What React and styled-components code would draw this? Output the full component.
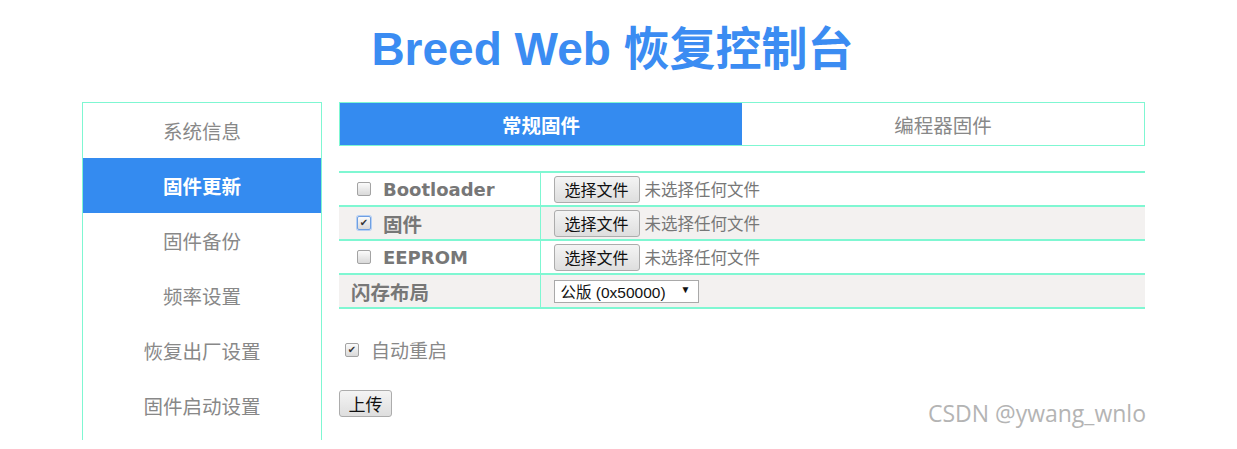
import React from 'react';
import styled, { createGlobalStyle } from 'styled-components';

const GlobalStyle = createGlobalStyle`
  body {
    margin: 0;
    background: #fff;
    font-family: 'Liberation Sans', 'Noto Sans CJK SC', sans-serif;
  }
`;

const menuItems = ['系统信息', '固件更新', '固件备份', '频率设置', '恢复出厂设置', '固件启动设置'];

const rows = [
  { name: 'Bootloader', checked: false },
  { name: '固件', checked: true, focus: true, cjk: true },
  { name: 'EEPROM', checked: false },
];

const App = () => {
  return (
    <Page>
      <GlobalStyle />
      <Title>Breed Web 恢复控制台</Title>
      <Layout>
        <Sidebar>
          {menuItems.map((item) => (
            <MenuItem key={item} active={item === '固件更新'}>
              {item}
            </MenuItem>
          ))}
        </Sidebar>
        <Main>
          <Tabs>
            <Tab active>常规固件</Tab>
            <Tab>编程器固件</Tab>
          </Tabs>
          <Table>
            <tbody>
              {rows.map((row, i) => (
                <Row key={row.name} striped={i % 2 === 1}>
                  <LabelCell>
                    <Check checked={row.checked} focus={row.focus}>
                      {row.checked ? '✔' : ''}
                    </Check>
                    <Label cjk={row.cjk}>{row.name}</Label>
                  </LabelCell>
                  <ValueCell>
                    <FileButton>选择文件</FileButton>
                    <NoFile>未选择任何文件</NoFile>
                  </ValueCell>
                </Row>
              ))}
              <Row striped>
                <LabelCell plain>
                  <Label cjk>闪存布局</Label>
                </LabelCell>
                <ValueCell>
                  <Select>
                    <span>公版 (0x50000)</span>
                    <Arrow>▼</Arrow>
                  </Select>
                </ValueCell>
              </Row>
            </tbody>
          </Table>
          <Option>
            <Check checked>✔</Check>
            <span>自动重启</span>
          </Option>
          <UploadButton>上传</UploadButton>
        </Main>
      </Layout>
      <Watermark>CSDN @ywang_wnlo</Watermark>
    </Page>
  );
};

const Page = styled.div`
  position: relative;
  width: 1237px;
  height: 449px;
  overflow: hidden;
`;

const Title = styled.h1`
  margin: 22px 0 0;
  padding-right: 12px;
  height: 58px;
  line-height: 55px;
  text-align: center;
  font-size: 46px;
  font-weight: 700;
  color: #3b8cf2;
`;

const Layout = styled.div`
  display: flex;
  gap: 17px;
  margin: 22px 0 0 82px;
  width: 1063px;
`;

const Sidebar = styled.div`
  width: 238px;
  height: 337px;
  border: 1px solid #7ff7d2;
  border-bottom: none;
  flex-shrink: 0;
`;

const MenuItem = styled.div`
  height: 55px;
  display: flex;
  align-items: center;
  justify-content: center;
  font-family: 'Noto Sans CJK SC', sans-serif;
  font-size: 19.5px;
  font-weight: ${(p) => (p.active ? 700 : 400)};
  color: ${(p) => (p.active ? '#fff' : '#888')};
  background: ${(p) => (p.active ? '#348bf0' : 'transparent')};
`;

const Main = styled.div`
  width: 807px;
  display: flex;
  flex-direction: column;
  align-items: flex-start;
`;

const Tabs = styled.div`
  display: flex;
  width: 100%;
  height: 44px;
  border: 1px solid #7ff7d2;
  box-sizing: border-box;
`;

const Tab = styled.div`
  flex: 1;
  display: flex;
  align-items: center;
  justify-content: center;
  font-family: 'Noto Sans CJK SC', sans-serif;
  font-size: 19.5px;
  font-weight: ${(p) => (p.active ? 700 : 400)};
  color: ${(p) => (p.active ? '#fff' : '#888')};
  background: ${(p) => (p.active ? '#348bf0' : '#fff')};
`;

const Table = styled.table`
  margin-top: 25px;
  width: 806px;
  border-collapse: collapse;
`;

const Row = styled.tr`
  height: 34px;
  background: ${(p) => (p.striped ? '#f3f1f0' : '#fff')};
  border-top: 2px solid #7ff7d2;
  border-bottom: 2px solid #7ff7d2;
`;

const LabelCell = styled.td`
  box-sizing: border-box;
  width: 201px;
  padding: 0 0 0 ${(p) => (p.plain ? '12px' : '18px')};
  border-right: 1px solid #7ff7d2;
  white-space: nowrap;
`;

const ValueCell = styled.td`
  padding: 0 0 0 13px;
  white-space: nowrap;
`;

const Check = styled.span`
  display: inline-flex;
  align-items: center;
  justify-content: center;
  vertical-align: middle;
  width: 12px;
  height: 12px;
  margin-right: 12px;
  border: 1px solid ${(p) => (p.focus ? '#6f9fe2' : '#a3a3a3')};
  box-shadow: ${(p) => (p.focus ? '0 0 0 1px #b5d0f4' : 'none')};
  border-radius: 2px;
  background: linear-gradient(#fbfbfb, #d9d9d9);
  font-family: 'DejaVu Sans', sans-serif;
  font-size: 10px;
  font-weight: 700;
  line-height: 1;
  color: #333;
`;

const Label = styled.span`
  vertical-align: middle;
  font-family: ${(p) => (p.cjk ? "'Noto Sans CJK SC'" : "'DejaVu Sans', 'Noto Sans CJK SC'")}, sans-serif;
  font-size: ${(p) => (p.cjk ? '19.5px' : '18px')};
  font-weight: 700;
  color: #777;
`;

const FileButton = styled.button`
  height: 27px;
  width: 86px;
  padding: 0;
  vertical-align: middle;
  border: 1px solid #acacac;
  border-radius: 3px;
  background: linear-gradient(#f4f4f4, #dedede);
  font-family: 'Noto Sans CJK SC', sans-serif;
  font-size: 16px;
  color: #111;
`;

const NoFile = styled.span`
  margin-left: 5px;
  vertical-align: middle;
  font-family: 'Noto Sans CJK SC', sans-serif;
  font-size: 16.5px;
  color: #777;
`;

const Select = styled.div`
  display: inline-flex;
  align-items: center;
  justify-content: space-between;
  box-sizing: border-box;
  width: 145px;
  height: 23px;
  padding: 0 7px 0 6px;
  vertical-align: middle;
  border: 1px solid #a9a9a9;
  background: #fff;
  font-family: 'Liberation Sans', 'Noto Sans CJK SC', sans-serif;
  font-size: 15.5px;
  color: #111;
`;

const Arrow = styled.span`
  font-size: 10px;
  margin-top: -4px;
`;

const Option = styled.div`
  display: flex;
  align-items: center;
  margin: 27px 0 0 6px;
  font-family: 'Noto Sans CJK SC', sans-serif;
  font-size: 19px;
  color: #888;
`;

const UploadButton = styled.button`
  margin-top: 27px;
  width: 53px;
  height: 27px;
  padding: 0;
  border: 1px solid #acacac;
  border-radius: 3px;
  background: linear-gradient(#f4f4f4, #dedede);
  font-family: 'Noto Sans CJK SC', sans-serif;
  font-size: 17px;
  color: #111;
`;

const Watermark = styled.div`
  position: absolute;
  right: 91px;
  top: 397px;
  font-family: 'Open Sans', sans-serif;
  font-size: 23px;
  color: #b4b4b4;
`;

export default App;
